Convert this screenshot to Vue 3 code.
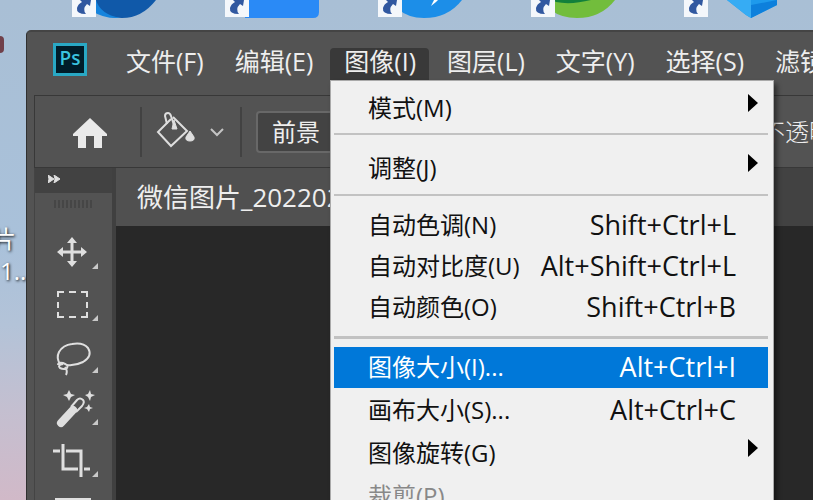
<template>
  <div class="desktop">
    <div class="shortcuts">
      <svg v-for="icon in shortcuts" :key="icon" class="shortcut" viewBox="0 0 96 20" aria-hidden="true">
        <template v-if="icon === 'browser'">
          <path d="M20 0H84Q70 18 50 18Q32 18 20 8Z" fill="#1059a9" />
          <path d="M24 0Q28 14 48 18Q32 19 20 11V0Z" fill="#1684dd" />
        </template>
        <path v-else-if="icon === 'meeting'" d="M20 0H94V12Q94 18 88 18H20Z" fill="#2a8af6" />
        <template v-else-if="icon === 'messenger'">
          <path d="M20 0H84Q70 18 46 18Q30 18 20 9Z" fill="#1c8ee8" />
          <path d="M56 0L53 6L58 2L60 0Z" fill="#fff" />
        </template>
        <template v-else-if="icon === 'cloud'">
          <path d="M20 0H84Q70 18 46 18Q30 18 20 10Z" fill="#72bd3c" />
          <path d="M22 0H60Q40 5 25 2Z" fill="#12803b" />
        </template>
        <template v-else>
          <path d="M43 0H93V5L67 18L62 15Z" fill="#1e9aec" />
          <path d="M43 0H67V18L62 15Z" fill="#36acf4" />
          <path d="M67 5L93 0V5L67 18Z" fill="#0d80dc" />
        </template>
        <path d="M0 0H24V17H0Z" fill="#f4f7fb" />
        <path d="M8 0L19 0L18 6L15 4Q10 9 14 14Q4 14 5 8Q6 4 10 2Z" fill="#3158a0" />
      </svg>
    </div>
    <span class="red-mark"></span>
    <div class="file-label">
      <span>片</span>
      <span class="file-number">1...</span>
    </div>

    <main class="window">
      <header class="menubar">
        <span class="logo">Ps</span>
        <nav class="menus">
          <button
            v-for="menu in menus"
            :key="menu"
            type="button"
            class="menu-button"
            :class="{ open: menu === openMenu }"
            @click="openMenu = menu"
          >{{ menu }}</button>
        </nav>
      </header>

      <section class="options">
        <span class="grip"></span>
        <button type="button" class="home" aria-label="主页">
          <svg width="34" height="31" viewBox="0 0 34 31">
            <path d="M17 0L34 16V18H29V30H21V18H13V30H5V18H0V16Z" fill="#e9e9e9" />
          </svg>
        </button>
        <button type="button" class="bucket" aria-label="油漆桶">
          <svg width="68" height="38" viewBox="0 0 68 38" fill="none" stroke="#dedede">
            <path d="M17 6L31 20L15 35L2 21L15 8" stroke-width="2" />
            <path d="M11 13L9 5Q9 2 12 2Q14 2 15 5L18 14" stroke-width="2" />
            <path d="M18 9L21 18H16L18 9M34 20L38 26Q39 30 34 30Q29 30 30 26Z" fill="#dedede" />
            <path d="M55 18L61 24L67 18" stroke="#c4c4c4" stroke-width="2" />
          </svg>
        </button>
        <button type="button" class="fill-source">前景</button>
        <label class="opacity" for="opacity">不透明度:</label>
        <input id="opacity" class="opacity-value" type="text" value="100%" />
      </section>

      <div class="workspace">
        <aside class="toolbar">
          <button type="button" class="expand" aria-label="展开">
            <svg width="13" height="8" viewBox="0 0 13 8">
              <path d="M0 0L6 4L0 8L1 4ZM6 0L12 4L6 8L7 4Z" fill="#e0e0e0" stroke="#e0e0e0" />
            </svg>
          </button>
          <div class="toolbar-grip"></div>
          <button v-for="tool in tools" :key="tool.id" type="button" class="tool" :aria-label="tool.label">
            <svg width="78" height="52" viewBox="0 0 78 52" fill="none" stroke="#dfdfdf" stroke-width="2">
              <template v-if="tool.id === 'move'">
                <path d="M37 14V38M25 26H49" stroke-width="3" />
                <path d="M37 11L42 17H32ZM37 41L42 35H32ZM22 26L28 21V31ZM52 26L46 21V31Z" fill="#dfdfdf" stroke="none" />
              </template>
              <path
                v-else-if="tool.id === 'marquee'"
                d="M23 19V14H29M34 14H41M46 14H52V19M52 24V30M52 34V39H46M41 39H34M29 39H23V34M23 30V24"
              />
              <template v-else-if="tool.id === 'lasso'">
                <path d="M25 34Q21 28 24 22Q28 15 37 14Q48 12 53 18Q58 26 48 32Q40 36 32 35" />
                <path d="M23 35Q23 32 28 33Q34 35 32 38Q29 40 25 38Q22 35 28 34M30 37Q33 41 31 45" />
              </template>
              <template v-else-if="tool.id === 'wand'">
                <path d="M26 41L38 28" stroke-width="8" stroke-linecap="round" />
                <path d="M36 25L42 18Q45 15 48 18Q50 20 47 24L41 30" />
                <path
                  d="M34 8L36 12L40 13L36 15L34 19L32 15L28 13L32 12ZM55 8L56 12L60 13L56 15L55 19L53 15L50 13L53 12ZM54 22L55 25L58 26L55 27L54 30L52 27L49 26L52 25Z"
                  fill="#dfdfdf"
                  stroke="none"
                />
              </template>
              <path v-else-if="tool.id === 'crop'" d="M18 17H25M28 10V35H43M31 17H46V43M49 35H55" stroke-width="3" />
              <path v-else d="M21 14V13H55V14M23 13V38H53V13" />
              <path d="M63 37V43H57Z" fill="#c9c9c9" stroke="none" />
            </svg>
          </button>
        </aside>
        <section class="document">
          <div class="tabs">
            <button type="button" class="tab">微信图片_20220211</button>
          </div>
        </section>
      </div>

      <div class="dropdown">
        <ul v-for="(group, i) in groups" :key="i" class="group">
          <li v-for="item in group" :key="item.text">
            <button type="button" class="item" :class="{ selected: item.selected }" :disabled="item.disabled">
              <span>{{ item.text }}</span>
              <span v-if="item.keys" class="keys">{{ item.keys }}</span>
              <svg v-if="item.submenu" class="arrow" width="10" height="18" viewBox="0 0 10 18">
                <path d="M0 0L10 9L0 18Z" fill="#000" />
              </svg>
            </button>
          </li>
        </ul>
      </div>
    </main>
  </div>
</template>

<script setup>
import { ref } from 'vue';

const openMenu = ref('图像(I)');

const shortcuts = ['browser', 'meeting', 'messenger', 'cloud', 'cube'];

const menus = ['文件(F)', '编辑(E)', '图像(I)', '图层(L)', '文字(Y)', '选择(S)', '滤镜(T)'];

const tools = [
  { id: 'move', label: '移动' },
  { id: 'marquee', label: '矩形选框' },
  { id: 'lasso', label: '套索' },
  { id: 'wand', label: '魔棒' },
  { id: 'crop', label: '裁剪' },
  { id: 'frame', label: '图框' },
];

const groups = [
  [{ text: '模式(M)', submenu: true }],
  [{ text: '调整(J)', submenu: true }],
  [
    { text: '自动色调(N)', keys: 'Shift+Ctrl+L' },
    { text: '自动对比度(U)', keys: 'Alt+Shift+Ctrl+L' },
    { text: '自动颜色(O)', keys: 'Shift+Ctrl+B' },
  ],
  [
    { text: '图像大小(I)...', keys: 'Alt+Ctrl+I', selected: true },
    { text: '画布大小(S)...', keys: 'Alt+Ctrl+C' },
    { text: '图像旋转(G)', submenu: true },
    { text: '裁剪(P)', disabled: true },
  ],
];
</script>

<style>
body {
  margin: 0;
  overflow: hidden;
}
</style>

<style scoped>
* {
  box-sizing: border-box;
}

.desktop {
  position: relative;
  height: 100vh;
  overflow: hidden;
  background: linear-gradient(#a9bfd5 0%, #a9c1da 48%, #b3c3d8 65%, #c4bfd0 82%, #d1b9c8 100%);
  font-family: "Open Sans", "Noto Sans CJK SC", sans-serif;
  font-size: 24px;
}

button {
  border: 0;
  padding: 0;
  background: none;
  color: inherit;
  font: inherit;
  text-align: left;
  white-space: nowrap;
}

svg {
  display: block;
}

.shortcuts {
  display: flex;
  gap: 57px;
  padding-left: 72px;
}

.shortcut {
  flex: none;
  width: 96px;
  height: 20px;
}

.red-mark {
  position: absolute;
  top: 36px;
  left: 0;
  width: 4px;
  height: 17px;
  border-radius: 0 4px 4px 0;
  background: #70404a;
}

.file-label {
  position: absolute;
  top: 223px;
  left: -8px;
  display: flex;
  flex-direction: column;
  color: #fff;
  line-height: 32px;
  text-shadow: 1px 1px 3px #000;
}

.file-number {
  padding-left: 8px;
}

.window {
  position: absolute;
  top: 30px;
  right: 0;
  bottom: 0;
  left: 26px;
  display: flex;
  flex-direction: column;
  padding-left: 7px;
  border-top: 2px solid #444;
  border-left: 1px solid #303030;
  border-top-left-radius: 5px;
  background: #535353;
  color: #eee;
}

.menubar {
  display: flex;
  flex: none;
  align-items: flex-start;
  height: 63px;
  padding: 11px 0 0 19px;
}

.logo {
  flex: none;
  width: 34px;
  height: 33px;
  border: 3px solid #29a9c5;
  background: #001d29;
  color: #3ac4df;
  font-size: 19px;
  font-weight: 600;
  line-height: 25px;
  text-align: center;
}

.menus {
  display: flex;
  gap: 4px;
  padding: 5px 0 0 25px;
}

.menu-button {
  flex: none;
  height: 32px;
  padding: 0 13px 6px 14px;
  border-radius: 4px 4px 0 0;
  font-size: 25px;
  line-height: 26px;
}

.menu-button.open {
  background: #393939;
}

.options {
  display: flex;
  flex: none;
  align-items: center;
  height: 73px;
  border: 1px solid #383838;
  border-right: 0;
}

.grip {
  width: 4px;
  height: 38px;
  margin: 0 31px 0 7px;
  background: repeating-linear-gradient(#464646 0 2px, #535353 2px 4px);
}

.home {
  padding: 4px 33px 0 0;
}

.bucket {
  display: flex;
  flex: none;
  align-items: center;
  height: 50px;
  padding: 0 16px 4px 14px;
  border-right: 2px solid #424242;
  border-left: 2px solid #424242;
}

.fill-source {
  flex: none;
  width: 220px;
  height: 42px;
  margin-left: 14px;
  padding-left: 14px;
  border: 2px solid #686868;
  border-radius: 4px;
  background: #434343;
  line-height: 34px;
}

.opacity {
  flex: none;
  margin-left: 285px;
  font-weight: 300;
  line-height: 34px;
}

.opacity-value {
  width: 80px;
  border: 1px solid #686868;
  background: #434343;
  color: #eee;
  font: inherit;
}

.workspace {
  display: flex;
  flex: 1;
  min-height: 0;
}

.toolbar {
  flex: none;
  width: 82px;
  overflow: hidden;
  border-right: 4px solid #404040;
  border-left: 1px solid #444;
}

.expand {
  display: flex;
  align-items: center;
  width: 100%;
  height: 25px;
  padding: 0 0 3px 13px;
  background: #424242;
}

.toolbar-grip {
  width: 38px;
  height: 8px;
  margin: 7px 0 18px 19px;
  background: repeating-linear-gradient(90deg, #464646 0 2px, #535353 2px 4px);
}

.tool {
  display: block;
}

.document {
  flex: 1;
  min-width: 0;
  background: #282828;
}

.tabs {
  height: 58px;
  overflow: hidden;
  background: #424242;
}

.tab {
  width: 520px;
  height: 58px;
  padding-left: 21px;
  background: #505050;
  font-size: 26px;
  line-height: 54px;
}

.dropdown {
  position: absolute;
  top: 48px;
  left: 303px;
  width: 444px;
  padding: 0 5px 0 3px;
  border: 1px solid #aaa;
  background: #f0f0f0;
  box-shadow: 3px 4px 5px #0007;
  color: #111;
}

.group {
  display: flex;
  flex-direction: column;
  margin: 0;
  padding: 8px 0;
  list-style: none;
}

.group + .group {
  border-top: 2px solid #c2c2c2;
}

.group:nth-child(1) {
  padding: 7px 0 4px;
}

.group:nth-child(2) {
  padding: 13px 0 5px;
}

.group:nth-child(3) {
  padding: 9px 0 8px;
}

.group:nth-child(4) {
  gap: 2px;
  border-top-width: 3px;
}

.item {
  display: flex;
  width: 100%;
  height: 41px;
  padding: 0 10px 0 34px;
  line-height: 40px;
}

.item.selected {
  background: #0078d9;
  color: #fff;
}

.item:disabled {
  color: #888;
}

.keys {
  margin-left: auto;
  padding-right: 22px;
  font-size: 27px;
}

.arrow {
  margin: 6px 0 0 auto;
}
</style>
